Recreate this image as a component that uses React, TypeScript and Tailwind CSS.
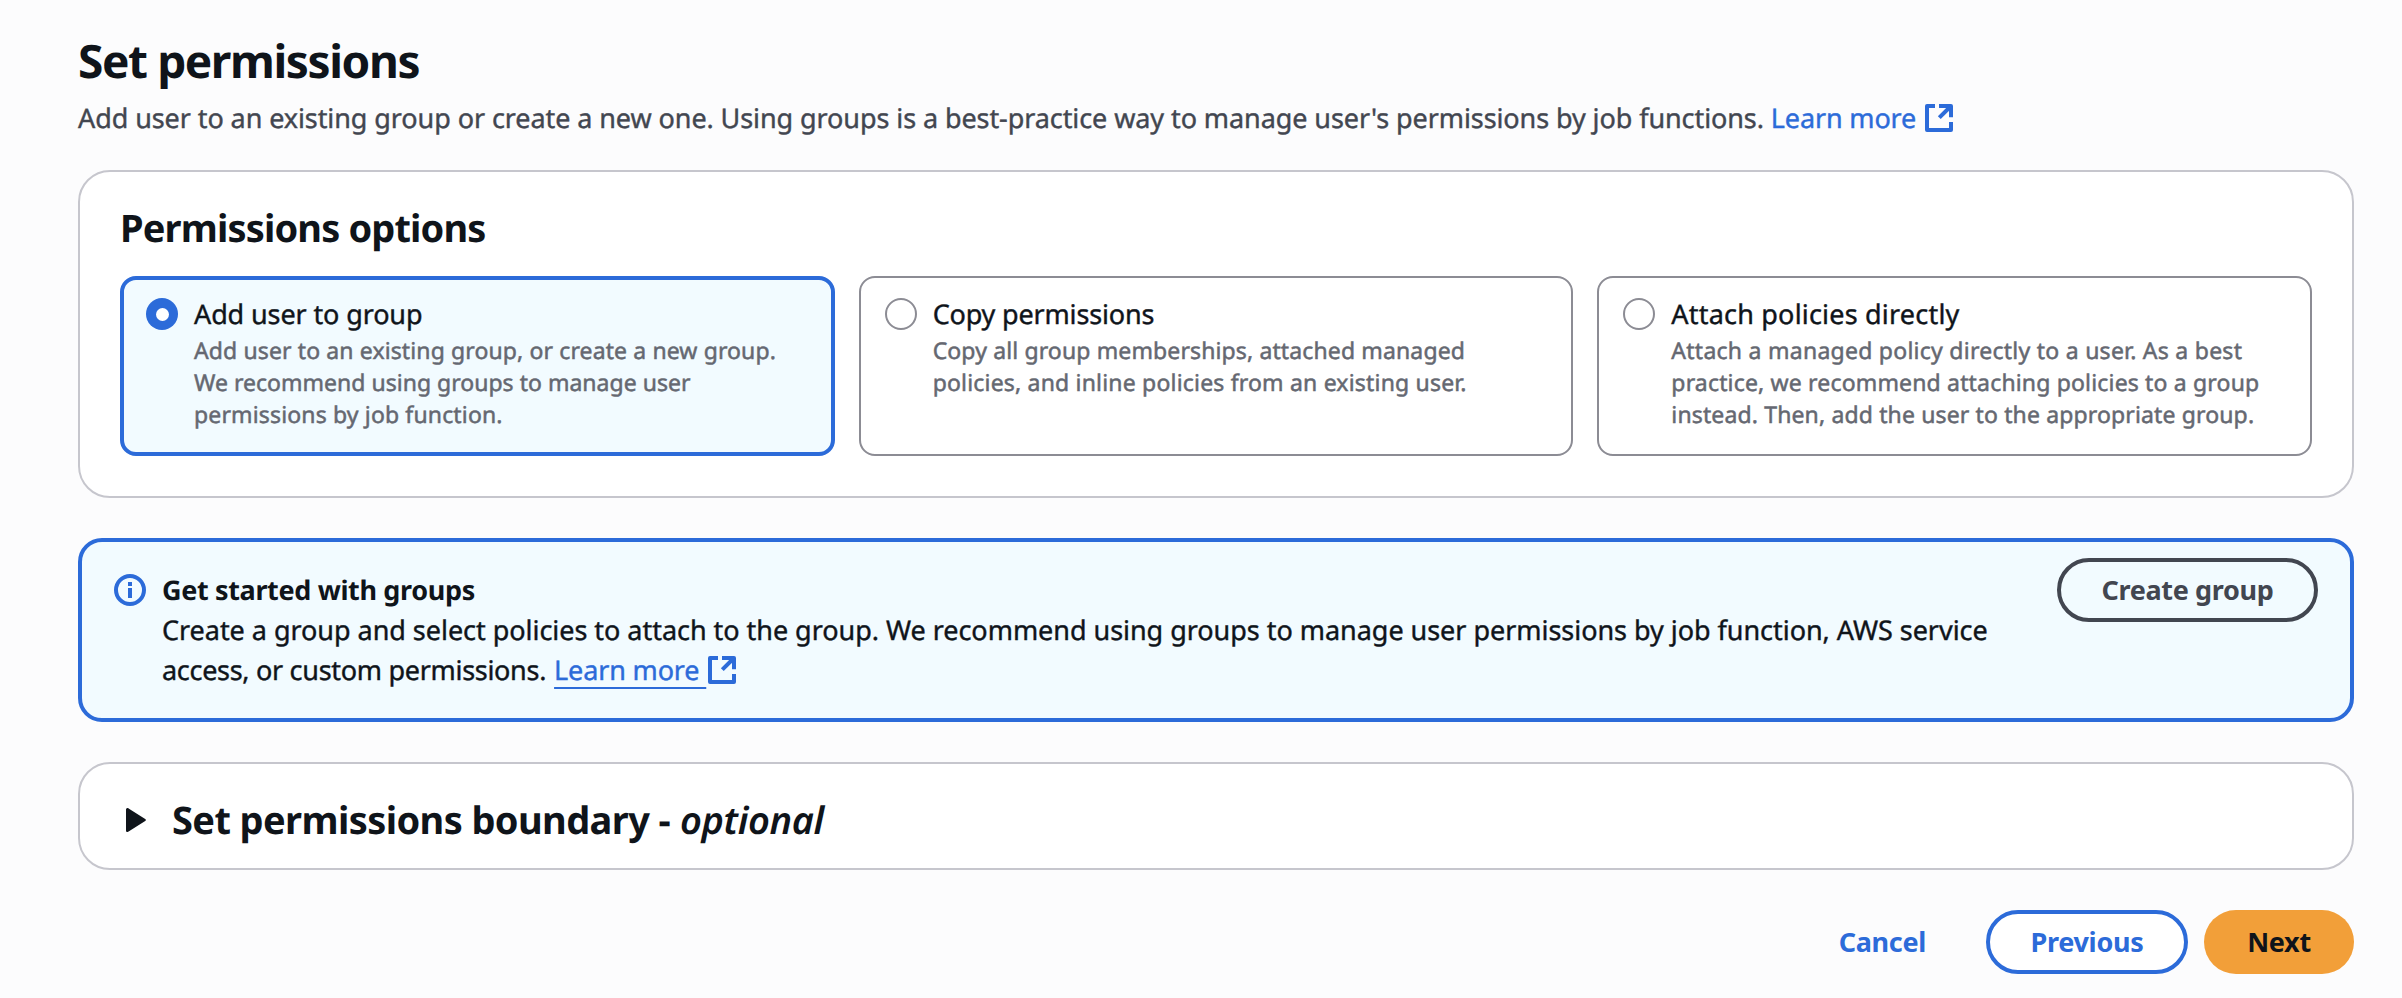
import React from "react";

function ExternalIcon({ className }: { className?: string }) {
  return (
    <svg viewBox="0 0 28 28" className={`inline-block size-7 shrink-0 ${className ?? ""}`} fill="none" stroke="currentColor" strokeWidth="4" strokeLinejoin="round">
      <path d="M10 2H2V26H26V18" />
      <path d="M14 2H26V13.2" />
      <path d="M26 2L14.3 13.7" />
    </svg>
  );
}

function Radio({ selected }: { selected?: boolean }) {
  return selected ? (
    <span className="mt-1 flex size-8 shrink-0 items-center justify-center rounded-full bg-[#2c6bd9]">
      <span className="size-[13px] rounded-full bg-white" />
    </span>
  ) : (
    <span className="mt-1 size-8 shrink-0 rounded-full border-2 border-[#8c8c94] bg-white" />
  );
}

type Line = { text: string; tracking: string };

type Option = {
  title: string;
  titleTracking: string;
  lines: Line[];
  selected?: boolean;
};

const options: Option[] = [
  {
    title: "Add user to group",
    titleTracking: "tracking-[-0.12px]",
    selected: true,
    lines: [
      { text: "Add user to an existing group, or create a new group.", tracking: "tracking-[0.12px]" },
      { text: "We recommend using groups to manage user", tracking: "tracking-[0.02px]" },
      { text: "permissions by job function.", tracking: "tracking-[0.15px]" },
    ],
  },
  {
    title: "Copy permissions",
    titleTracking: "tracking-[-0.17px]",
    lines: [
      { text: "Copy all group memberships, attached managed", tracking: "tracking-[0.13px]" },
      { text: "policies, and inline policies from an existing user.", tracking: "tracking-[0.19px]" },
    ],
  },
  {
    title: "Attach policies directly",
    titleTracking: "tracking-[0.2px]",
    lines: [
      { text: "Attach a managed policy directly to a user. As a best", tracking: "tracking-[0.26px]" },
      { text: "practice, we recommend attaching policies to a group", tracking: "tracking-[0.17px]" },
      { text: "instead. Then, add the user to the appropriate group.", tracking: "tracking-[0.14px]" },
    ],
  },
];

function OptionCard({ option }: { option: Option }) {
  return (
    <label
      className={
        option.selected
          ? "flex h-[180px] gap-4 rounded-2xl border-4 border-[#2c6bd9] bg-[#f2fbff] px-[22px] pt-3.5"
          : "flex h-[180px] gap-4 rounded-2xl border-2 border-[#8c8c94] bg-white px-6 pt-4"
      }
    >
      <Radio selected={option.selected} />
      <span className="flex flex-col whitespace-nowrap">
        <span className={`text-[27px] leading-10 text-[#0f141a] [-webkit-text-stroke:0.4px_currentColor] ${option.titleTracking}`}>
          {option.title}
        </span>
        {option.lines.map((line) => (
          <span key={line.text} className={`text-[23px] leading-8 text-[#656871] [-webkit-text-stroke:0.5px_currentColor] ${line.tracking}`}>
            {line.text}
          </span>
        ))}
      </span>
    </label>
  );
}

export default function App() {
  return (
    <main className="min-h-[998px] w-[2402px] bg-[#fcfcfd] pt-8 pr-12 pl-[78px] font-['Noto_Sans',sans-serif] text-[#0f141a] [text-rendering:geometricPrecision]">
      <header>
        <h1 className="text-[46px] leading-[58px] font-bold tracking-[-1.4px]">Set permissions</h1>
        <p className="mt-2 flex items-center text-[27px] leading-10 whitespace-nowrap text-[#424650] [-webkit-text-stroke:0.4px_currentColor]">
          <span className="tracking-[-0.085px]">
            Add user to an existing group or create a new one. Using groups is a best-practice way to manage user's permissions by job functions.
          </span>
          <a className="ml-[7px] flex items-center text-[#2c6bd9]">
            <span className="tracking-[-0.15px]">Learn more</span>
            <ExternalIcon className="ml-[9px]" />
          </a>
        </p>
      </header>

      <section className="mt-8 h-[328px] rounded-[32px] border-2 border-[#c6c6cd] bg-white px-10 pt-8">
        <h2 className="text-[38px] leading-[48px] font-bold tracking-[-0.85px]">Permissions options</h2>
        <div className="mt-6 grid grid-cols-3 gap-6">
          {options.map((option) => (
            <OptionCard key={option.title} option={option} />
          ))}
        </div>
      </section>

      <section className="mt-10 flex h-[184px] items-start rounded-3xl border-4 border-[#2c6bd9] bg-[#f2fbff] px-8 pt-4">
        <svg viewBox="0 0 32 32" className="mt-4 size-8 shrink-0" fill="#2c6bd9">
          <circle cx="16" cy="16" r="14" fill="none" stroke="#2c6bd9" strokeWidth="4" />
          <rect x="14" y="8" width="4" height="4" />
          <rect x="14" y="14" width="4" height="10" />
        </svg>
        <div className="mt-3 ml-4 grow text-[27px] leading-10 whitespace-nowrap">
          <div className="font-bold tracking-[-0.35px]">Get started with groups</div>
          <div className="tracking-[-0.035px] [-webkit-text-stroke:0.4px_currentColor]">
            Create a group and select policies to attach to the group. We recommend using groups to manage user permissions by job function, AWS service
          </div>
          <div className="flex items-center [-webkit-text-stroke:0.4px_currentColor]">
            <span className="tracking-[-0.3px]">access, or custom permissions.</span>
            <a className="ml-2 flex items-center text-[#2c6bd9]">
              <span className="tracking-[-0.15px] underline decoration-2 underline-offset-[7px]">Learn more&nbsp;</span>
              <ExternalIcon className="ml-[2px]" />
            </a>
          </div>
        </div>
        <button className="h-16 w-[261px] shrink-0 rounded-full border-4 border-[#424650] text-[27px] leading-[56px] font-bold tracking-[-0.35px] text-[#424650]">
          Create group
        </button>
      </section>

      <section className="mt-10 flex h-[108px] items-start rounded-[32px] border-2 border-[#c6c6cd] bg-white pt-8 pl-[46px]">
        <svg viewBox="0 0 20 24" className="mt-3 h-6 w-5 shrink-0" fill="#0f141a">
          <path d="M0 1.6C0 .2 1.5-.5 2.6.4L19.2 10.9Q20.6 12 19.2 13.1L2.6 23.6C1.5 24.5 0 23.8 0 22.4Z" />
        </svg>
        <h2 className="ml-[26px] text-[38px] leading-[48px] font-bold whitespace-nowrap">
          <span className="tracking-[-0.6px]">Set permissions boundary -</span>
          <em className="ml-2.5 font-semibold tracking-[-0.4px]">optional</em>
        </h2>
      </section>

      <footer className="mt-10 flex h-16 items-center justify-end text-[27px] font-bold tracking-[-0.3px]">
        <button className="mr-[60px] h-16 text-[#2c6bd9]">Cancel</button>
        <button className="mr-4 h-16 w-[202px] rounded-full border-4 border-[#2c6bd9] bg-white text-[#2c6bd9]">Previous</button>
        <button className="h-16 w-[150px] rounded-full bg-[#f29f39]">Next</button>
      </footer>
    </main>
  );
}
